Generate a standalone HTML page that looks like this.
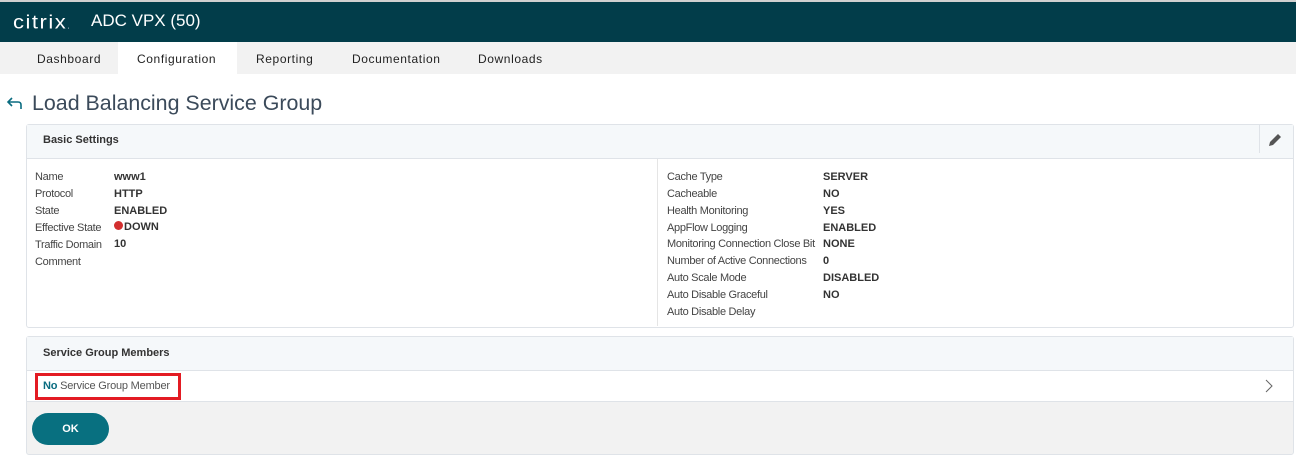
<!DOCTYPE html>
<html><head><style>
body{margin:0;width:1296px;height:461px;background:#fff;font-family:"Liberation Sans",sans-serif;position:relative;overflow:hidden;color:#333}
.a{position:absolute;white-space:nowrap}
.hdr{left:0;top:2px;width:1296px;height:40px;background:#023d4a}
.tabs{left:0;top:42px;width:1296px;height:32px;background:#f2f2f2}
.tab{top:52px;font-size:12px;letter-spacing:.6px;color:#222}
.lbl{font-size:11px;color:#444;letter-spacing:-.3px}
.val{font-size:11px;font-weight:bold;color:#333}
.box{border:1px solid #dfe3e8;border-radius:3px}
</style></head><body>
<div class="a" style="left:0;top:0;width:1296px;height:2px;background:#d0d0d0"></div>
<div class="a hdr"></div>
<div class="a" style="left:13px;top:9px;font-size:22px;color:#fff;letter-spacing:1.5px;font-weight:300;transform:scaleY(.9)">citrix<span style="font-size:8px">.</span></div>
<div class="a" style="left:91px;top:11px;font-size:17px;color:#fff">ADC VPX (50)</div>
<div class="a tabs"></div>
<div class="a" style="left:118px;top:42px;width:119px;height:32px;background:#fff"></div>
<div class="a tab" style="left:37px">Dashboard</div>
<div class="a tab" style="left:137px">Configuration</div>
<div class="a tab" style="left:256px">Reporting</div>
<div class="a tab" style="left:352px">Documentation</div>
<div class="a tab" style="left:478px">Downloads</div>
<svg class="a" style="left:5px;top:96px" width="20" height="16"><path d="M16 13V9Q16 6 13 6H3M7 2L3 6 7 10" fill="none" stroke="#0a6c80" stroke-width="1.6"/></svg>
<div class="a" style="left:32px;top:91px;font-size:21.4px;color:#3b4a5a">Load Balancing Service Group</div>

<div class="a box" style="left:26px;top:124px;width:1266px;height:202px"></div>
<div class="a" style="left:27px;top:125px;width:1266px;height:33px;background:#f5f8fa;border-bottom:1px solid #dfe3e8"></div>
<div class="a" style="left:1259px;top:125px;width:1px;height:28px;background:#dfe3e8"></div>
<svg class="a" style="left:1267px;top:132px" width="16" height="16"><path d="M2 14L3 10 11 2 14 5 6 13Z" fill="#555"/></svg>
<div class="a" style="left:43px;top:134px;font-size:11px;font-weight:bold;color:#333">Basic Settings</div>
<div class="a" style="left:657px;top:159px;width:1px;height:167px;background:#e5e5e5"></div>

<div class="a lbl" style="left:35px;top:171px">Name</div><div class="a val" style="left:114px;top:171px">www1</div>
<div class="a lbl" style="left:35px;top:188px">Protocol</div><div class="a val" style="left:114px;top:188px">HTTP</div>
<div class="a lbl" style="left:35px;top:205px">State</div><div class="a val" style="left:114px;top:205px">ENABLED</div>
<div class="a lbl" style="left:35px;top:222px">Effective State</div><div class="a val" style="left:114px;top:221px"><span style="display:inline-block;width:9px;height:9px;border-radius:50%;background:#d32f2f;margin-right:1px"></span>DOWN</div>
<div class="a lbl" style="left:35px;top:239px">Traffic Domain</div><div class="a val" style="left:114px;top:238px">10</div>
<div class="a lbl" style="left:35px;top:256px">Comment</div>

<div class="a lbl" style="left:667px;top:171px">Cache Type</div><div class="a val" style="left:823px;top:171px">SERVER</div>
<div class="a lbl" style="left:667px;top:188px">Cacheable</div><div class="a val" style="left:823px;top:188px">NO</div>
<div class="a lbl" style="left:667px;top:205px">Health Monitoring</div><div class="a val" style="left:823px;top:205px">YES</div>
<div class="a lbl" style="left:667px;top:222px">AppFlow Logging</div><div class="a val" style="left:823px;top:222px">ENABLED</div>
<div class="a lbl" style="left:667px;top:238px">Monitoring Connection Close Bit</div><div class="a val" style="left:823px;top:238px">NONE</div>
<div class="a lbl" style="left:667px;top:255px">Number of Active Connections</div><div class="a val" style="left:823px;top:255px">0</div>
<div class="a lbl" style="left:667px;top:272px">Auto Scale Mode</div><div class="a val" style="left:823px;top:272px">DISABLED</div>
<div class="a lbl" style="left:667px;top:289px">Auto Disable Graceful</div><div class="a val" style="left:823px;top:289px">NO</div>
<div class="a lbl" style="left:667px;top:306px">Auto Disable Delay</div>

<div class="a box" style="left:26px;top:336px;width:1266px;height:117px;background:#f2f2f2"></div>
<div class="a" style="left:27px;top:337px;width:1266px;height:33px;background:#f5f8fa;border-bottom:1px solid #dfe3e8"></div>
<div class="a" style="left:43px;top:347px;font-size:11px;font-weight:bold;color:#333">Service Group Members</div>
<div class="a" style="left:27px;top:371px;width:1266px;height:30px;background:#fff;border-bottom:1px solid #dfe3e8"></div>
<div class="a" style="left:35px;top:373px;width:140px;height:21px;border:3px solid #e31b23"></div>
<div class="a" style="left:43px;top:380px;font-size:11px;color:#555;letter-spacing:-.2px"><b style="color:#0a6c80">No</b> Service Group Member</div>
<svg class="a" style="left:1264px;top:379px" width="10" height="14"><path d="M2 1L8 7 2 13" fill="none" stroke="#666" stroke-width="1"/></svg>
<div class="a" style="left:32px;top:413px;width:77px;height:32px;border-radius:16px;background:#087080;color:#fff;font-size:11px;font-weight:bold;text-align:center;line-height:32px">OK</div>
</body></html>
